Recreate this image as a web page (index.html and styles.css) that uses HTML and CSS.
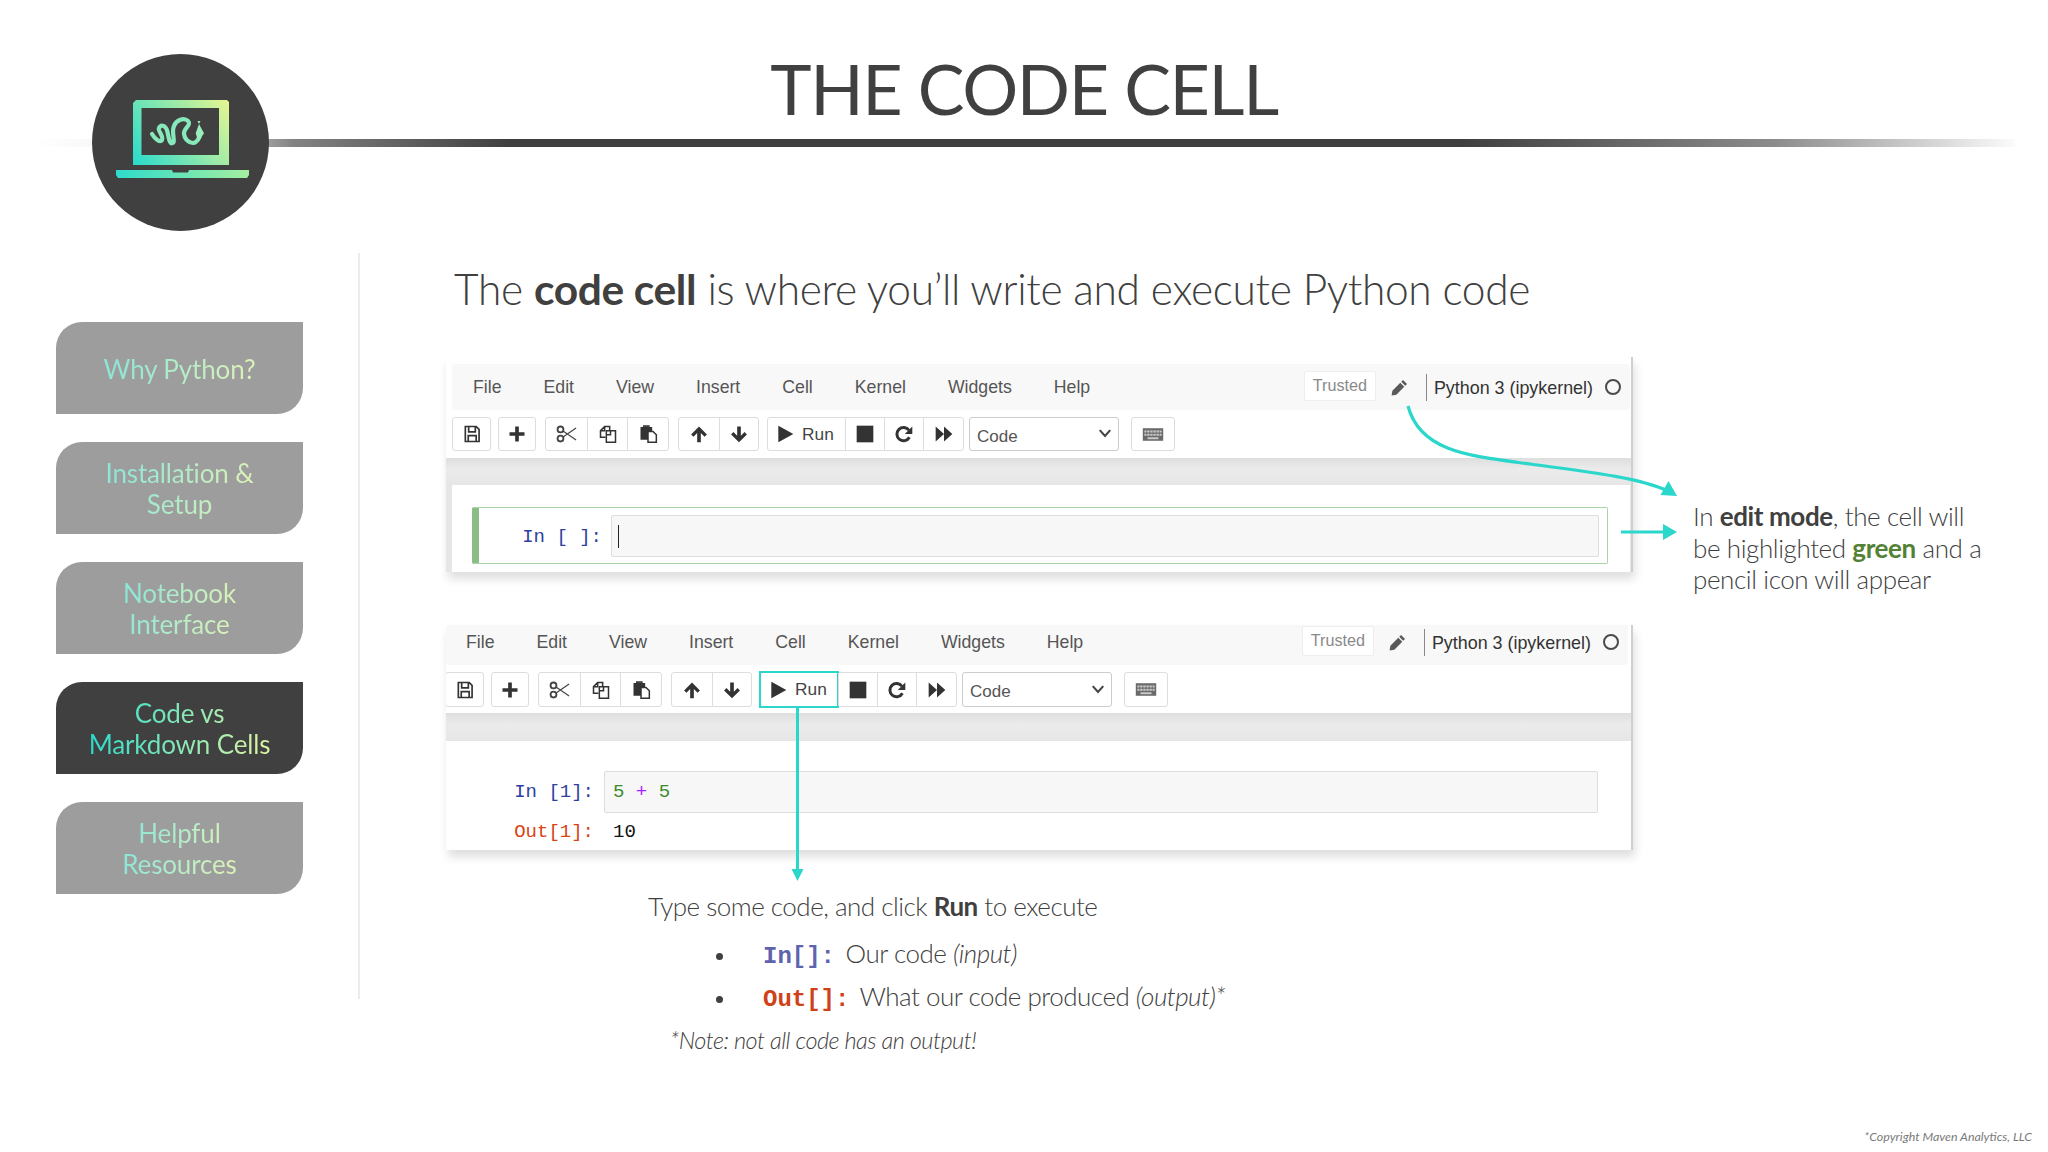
FILE: index.html
```html
<!DOCTYPE html>
<html lang="en">
<head>
<meta charset="utf-8">
<title>The Code Cell</title>
<link rel="stylesheet" href="styles.css">
</head>
<body>
<svg class="defs" width="0" height="0" aria-hidden="true">
  <defs>
    <linearGradient id="logoGrad" gradientUnits="userSpaceOnUse" x1="45" y1="110" x2="135" y2="45">
      <stop offset="0" stop-color="#2edbcb"/><stop offset="1" stop-color="#e6f590"/>
    </linearGradient>
    <linearGradient id="baseGrad" x1="0" y1="0" x2="1" y2="0">
      <stop offset="0" stop-color="#2edbcb"/><stop offset="1" stop-color="#a5eea0"/>
    </linearGradient>
    <symbol id="i-save" viewBox="0 0 24 24"><path d="M4 3h13l3.500 3.500V21H4z M8 3.500v6h8v-6 M7.500 21v-7h9.500v7" fill="none" stroke="currentColor" stroke-width="2"/></symbol>
    <symbol id="i-plus" viewBox="0 0 24 24"><path d="M9.800 3h4.400v6.800H21v4.400h-6.800V21H9.800v-6.800H3V9.800h6.800z" fill="currentColor"/></symbol>
    <symbol id="i-cut" viewBox="0 0 24 24"><circle cx="6" cy="7" r="3.200" fill="none" stroke="currentColor" stroke-width="2"/><circle cx="6" cy="17" r="3.200" fill="none" stroke="currentColor" stroke-width="2"/><path d="M8.800 8.800 23 18.500M8.800 15.200 23 5.500" stroke="currentColor" stroke-width="1.300" fill="none"/></symbol>
    <symbol id="i-copy" viewBox="0 0 24 24"><path d="M9 16H3V8l5-5h6v5 M8 3v5H3" fill="none" stroke="currentColor" stroke-width="1.800"/><path d="M10 8h11v14H10z M15 8v5h-5" fill="#fff" stroke="currentColor" stroke-width="1.800"/></symbol>
    <symbol id="i-paste" viewBox="0 0 24 24"><path d="M3 3.500h14V9h-5v10H3z" fill="currentColor"/><path d="M6 1.500h8v2H6z" fill="currentColor"/><path d="M12 9h6l4 4v9H12z" fill="#fff" stroke="currentColor" stroke-width="1.800"/></symbol>
    <symbol id="i-up" viewBox="0 0 24 24"><path d="M12 3l9.500 9.500-2.800 2.800-4.500-4.500V22H9.800V10.800l-4.500 4.500-2.800-2.800z" fill="currentColor"/></symbol>
    <symbol id="i-down" viewBox="0 0 24 24"><path d="M12 22l9.500-9.500-2.800-2.800-4.500 4.500V3H9.800v11.200l-4.500-4.500-2.800 2.800z" fill="currentColor"/></symbol>
    <symbol id="i-play" viewBox="0 0 24 24"><path d="M4 2l18 10L4 22z" fill="currentColor"/></symbol>
    <symbol id="i-stop" viewBox="0 0 24 24"><path d="M2 2h20v20H2z" fill="currentColor"/></symbol>
    <symbol id="i-redo" viewBox="0 0 24 24"><path d="M18.500 16a8 8 0 1 1-.5-8.500" fill="none" stroke="currentColor" stroke-width="3.600"/><path d="M22 3v9h-9z" fill="currentColor"/></symbol>
    <symbol id="i-ff" viewBox="0 0 24 24"><path d="M2 3l10 9-10 9z M12 3l10 9-10 9z" fill="currentColor"/></symbol>
    <symbol id="i-kbd" viewBox="0 0 28 24"><path d="M1 4h26v16H1z" fill="#6a6a6a"/><path d="M3 7h22v2.500H3z M3 11h22v2.500H3z" fill="#c9c9c9"/><path d="M7 15.500h14V18H7z" fill="#c9c9c9"/><path d="M6 7v6.500 M10 7v6.500 M14 7v6.500 M18 7v6.500 M22 7v6.500" stroke="#6a6a6a" stroke-width="1"/></symbol>
    <symbol id="i-pencil" viewBox="0 0 24 24"><path d="M16.500 2.500l5 5-2.300 2.300-5-5z M13 6l5 5L8 21l-6 1 1-6z" fill="currentColor"/></symbol>
    <symbol id="i-chev" viewBox="0 0 24 24"><path d="M3 7l9 10 9-10" fill="none" stroke="currentColor" stroke-width="3.600"/></symbol>
  </defs>
</svg>

<div class="slide">
  <header class="head">
    <h1 class="title">THE CODE CELL</h1>
    <div class="rule"></div>
    <div class="logo">
      <svg class="logo-art" viewBox="0 0 177 177" width="177" height="177" aria-hidden="true">
        <path fill-rule="evenodd" d="M44 46h91l2 2v63H41V49z M49.500 54v47h77.500V54z" fill="url(#logoGrad)"/>
        <path d="M24 116h56l1 2.500h15l1-2.500h60v5l-2 3H26l-2-3z" fill="url(#baseGrad)"/>
        <path d="M60 80C63 85 68 89 70 86C72 82 65 76 67 74C69 70 74 71 75.500 78C77 86 78 90 80.500 89C84 88 79 78 82 72C84 66 92 63 96 67C100 71 92 74 92 79C92 85 97 89 101 89C104 89 106 86 107.500 83" fill="none" stroke="#86e8bb" stroke-width="4.200" stroke-linecap="round"/>
        <path d="M107 70l5 9.300-5.700 8.400-2.600-8.400z M105.500 67h3l-1.500 3z" fill="#9beebb"/>
      </svg>
    </div>
  </header>

  <div class="body">
    <nav class="nav">
      <a class="nav-btn"><span class="nav-label">Why Python?</span></a>
      <a class="nav-btn"><span class="nav-label">Installation &amp;<br>Setup</span></a>
      <a class="nav-btn"><span class="nav-label">Notebook<br>Interface</span></a>
      <a class="nav-btn active"><span class="nav-label">Code vs<br>Markdown Cells</span></a>
      <a class="nav-btn"><span class="nav-label">Helpful<br>Resources</span></a>
    </nav>

    <main class="main">
      <h2 class="lead">The <b>code cell</b> is where you’ll write and execute Python code</h2>

      <div class="row">
        <section class="nb nb-edit">
          <div class="nb-inner">
            <div class="menubar">
              <span>File</span><span>Edit</span><span>View</span><span>Insert</span><span>Cell</span><span>Kernel</span><span>Widgets</span><span>Help</span>
              <div class="kernel">
                <span class="trusted">Trusted</span>
                <svg class="ic-pencil"><use href="#i-pencil"/></svg>
                <span class="kname">Python 3 (ipykernel)</span>
                <i class="kstatus"></i>
              </div>
            </div>
            <div class="toolbar">
              <div class="group"><div class="tb w37"><svg class="ic"><use href="#i-save"/></svg></div></div>
              <div class="group m7"><div class="tb w36"><svg class="ic"><use href="#i-plus"/></svg></div></div>
              <div class="group"><div class="tb w41"><svg class="ic ic-l"><use href="#i-cut"/></svg></div><div class="tb w41"><svg class="ic"><use href="#i-copy"/></svg></div><div class="tb w41"><svg class="ic"><use href="#i-paste"/></svg></div></div>
              <div class="group"><div class="tb w40"><svg class="ic"><use href="#i-up"/></svg></div><div class="tb w40"><svg class="ic"><use href="#i-down"/></svg></div></div>
              <div class="group m8"><div class="tb w77 run"><svg class="ic"><use href="#i-play"/></svg><span>Run</span></div><div class="tb w39"><svg class="ic"><use href="#i-stop"/></svg></div><div class="tb w39"><svg class="ic"><use href="#i-redo"/></svg></div><div class="tb w40b"><svg class="ic"><use href="#i-ff"/></svg></div></div>
              <div class="select">Code<svg class="ic-chev"><use href="#i-chev"/></svg></div>
              <div class="group m12"><div class="tb w42"><svg class="ic ic-k"><use href="#i-kbd"/></svg></div></div>
            </div>
            <div class="band"></div>
            <div class="panel">
              <div class="cell-selected">
                <div class="prompt in">In [ ]:</div>
                <div class="input"><i class="caret"></i></div>
              </div>
            </div>
          </div>
        </section>
        <p class="callout">In <b>edit mode</b>, the cell will<br>be highlighted <b class="green">green</b> and a<br>pencil icon will appear</p>
      </div>

      <section class="nb nb-run">
        <div class="nb-inner">
          <div class="menubar">
            <span>File</span><span>Edit</span><span>View</span><span>Insert</span><span>Cell</span><span>Kernel</span><span>Widgets</span><span>Help</span>
            <div class="kernel">
              <span class="trusted">Trusted</span>
              <svg class="ic-pencil"><use href="#i-pencil"/></svg>
              <span class="kname">Python 3 (ipykernel)</span>
              <i class="kstatus"></i>
            </div>
          </div>
          <div class="toolbar">
            <div class="group"><div class="tb w37"><svg class="ic"><use href="#i-save"/></svg></div></div>
            <div class="group m7"><div class="tb w36"><svg class="ic"><use href="#i-plus"/></svg></div></div>
            <div class="group"><div class="tb w41"><svg class="ic ic-l"><use href="#i-cut"/></svg></div><div class="tb w41"><svg class="ic"><use href="#i-copy"/></svg></div><div class="tb w41"><svg class="ic"><use href="#i-paste"/></svg></div></div>
            <div class="group"><div class="tb w40"><svg class="ic"><use href="#i-up"/></svg></div><div class="tb w40"><svg class="ic"><use href="#i-down"/></svg></div></div>
            <div class="group m8"><div class="tb w77 run hl"><svg class="ic"><use href="#i-play"/></svg><span>Run</span></div><div class="tb w39"><svg class="ic"><use href="#i-stop"/></svg></div><div class="tb w39"><svg class="ic"><use href="#i-redo"/></svg></div><div class="tb w40b"><svg class="ic"><use href="#i-ff"/></svg></div></div>
            <div class="select">Code<svg class="ic-chev"><use href="#i-chev"/></svg></div>
            <div class="group m12"><div class="tb w42"><svg class="ic ic-k"><use href="#i-kbd"/></svg></div></div>
          </div>
          <div class="band"></div>
          <div class="panel panel-run">
            <div class="io">
              <div class="prompt in">In [1]:</div>
              <div class="input code"><span class="num">5</span> <span class="op">+</span> <span class="num">5</span></div>
            </div>
            <div class="io io-out">
              <div class="prompt out">Out[1]:</div>
              <div class="output">10</div>
            </div>
          </div>
        </div>
      </section>

      <div class="notes">
        <p class="notes-lead">Type some code, and click <b>Run</b> to execute</p>
        <ul class="notes-list">
          <li class="n1"><code class="c-in">In[]:</code> Our code <em>(input)</em></li>
          <li class="n2"><code class="c-out">Out[]:</code> What our code produced <em>(output)*</em></li>
        </ul>
        <p class="notes-foot">*Note: not all code has an output!</p>
      </div>
    </main>
  </div>

  <footer class="foot">*Copyright Maven Analytics, LLC</footer>

  <svg class="arrows" viewBox="0 0 2048 1152" width="2048" height="1152" aria-hidden="true">
    <path d="M1408 406C1420 452 1470 456 1530 464S1640 478 1668 491" fill="none" stroke="#2bd6ca" stroke-width="3.200"/>
    <path d="M1677 496l-16.500-1 8-14z" fill="#2bd6ca"/>
    <path d="M1621 532h44" fill="none" stroke="#2bd6ca" stroke-width="3.200"/>
    <path d="M1677 532l-14-8v16z" fill="#2bd6ca"/>
    <path d="M797.500 707v165" fill="none" stroke="#2bd6ca" stroke-width="3"/>
    <path d="M797.500 881l-6-12h12z" fill="#2bd6ca"/>
  </svg>
</div>
</body>
</html>
```

FILE: styles.css
```css
* { box-sizing: border-box; }
html, body { margin: 0; padding: 0; background: #fff; }
.defs { position: absolute; }

.slide {
  position: relative;
  width: 2048px;
  height: 1152px;
  display: flex;
  flex-direction: column;
  overflow: hidden;
  font-family: Lato, "Liberation Sans", sans-serif;
  color: #404040;
}

/* header */
.head { position: relative; height: 253px; padding-top: 46px; flex: none; }
.title {
  margin: 0;
  height: 93px;
  line-height: 84px;
  font-size: 70px;
  font-weight: 400;
  letter-spacing: -1.4px;
  text-align: center;
  color: #404040;
}
.rule {
  margin-left: 35px;
  width: 1980px;
  height: 8px;
  background: linear-gradient(90deg, rgba(64,64,64,0) 0, rgba(64,64,64,.1) 8%, rgba(64,64,64,.65) 13%, #3f3f3f 24%, #3f3f3f 72%, rgba(64,64,64,.6) 88%, rgba(64,64,64,.02) 100%);
}
.logo {
  position: absolute;
  left: 92px;
  top: 54px;
  width: 177px;
  height: 177px;
  border-radius: 50%;
  background: #404040;
}
.logo-art { display: block; }

/* sidebar + content */
.body { display: flex; flex: none; }
.nav {
  width: 360px;
  height: 746px;
  flex: none;
  padding: 69px 0 0 56px;
  border-right: 2px solid #ececec;
  display: flex;
  flex-direction: column;
  gap: 28px;
}
.nav-btn {
  width: 247px;
  height: 92px;
  padding-top: 2px;
  display: flex;
  align-items: center;
  justify-content: center;
  text-align: center;
  background: #9d9d9d;
  border-radius: 26px 0 26px 0;
}
.nav-btn.active { background: #404040; }
.nav-label {
  font-size: 26px;
  letter-spacing: -.15px;
  line-height: 31px;
  background: linear-gradient(100deg, #8fe6d6 10%, #dcf2b8 95%);
  -webkit-background-clip: text;
  background-clip: text;
  color: transparent;
}
.active .nav-label { background-image: linear-gradient(100deg, #2edbcb 5%, #d8f5a5 95%); }

.main { padding-left: 86px; flex: 1; min-width: 0; }
.lead {
  margin: 11px 0 43px 8px;
  font-size: 42.500px;
  letter-spacing: -.36px;
  line-height: 50px;
  font-weight: 300;
  white-space: nowrap;
  color: #404040;
}
.lead b { font-weight: 700; }

.row { display: flex; align-items: flex-start; height: 223px; }

/* notebook screenshots */
.nb {
  width: 1187px;
  flex: none;
  overflow: hidden;
  background: #fff;
  border-right: 2px solid #cfcfcf;
  box-shadow: 2px 7px 9px rgba(0,0,0,.13);
  font-family: "Liberation Sans", Arial, sans-serif;
  color: #555;
}
.nb-edit { height: 215px; padding: 7px 1px 0 6px; background: linear-gradient(#fff 101px, #e6e6e6 101px); }
.nb-run { height: 225px; margin-top: 45px; padding-right: 3px; }
.nb-run .nb-inner { margin: -6px 0 0 -1px; }

.menubar {
  height: 46px;
  display: flex;
  align-items: center;
  gap: 42px;
  padding-left: 21px;
  background: #f8f8f8;
  border-radius: 4px;
  font-size: 17.700px;
}
.kernel { margin-left: auto; display: flex; align-items: center; height: 100%; }
.trusted {
  width: 72px;
  height: 30px;
  margin-top: -2px;
  border: 1px solid #eee;
  border-radius: 2px;
  background: #fff;
  color: #8a8a8a;
  font-size: 16.200px;
  line-height: 27px;
  text-align: center;
}
.ic-pencil { width: 19px; height: 21px; margin: 0 17px 0 14px; color: #595959; }
.kname {
  height: 27px;
  padding-left: 7px;
  border-left: 1px solid #888;
  color: #333;
  font-size: 17.900px;
  line-height: 28px;
}
.kstatus {
  width: 16px;
  height: 16px;
  margin: 0 9px 0 12px;
  border: 2px solid #4a4a4a;
  border-radius: 50%;
}

.toolbar { display: flex; margin-top: 7px; height: 34px; }
.group {
  display: flex;
  margin-left: 9px;
  border: 1px solid #ddd;
  border-radius: 3px;
  background: #fff;
}
.group:first-child { margin-left: 0; }
.group.m7 { margin-left: 7px; }
.group.m8 { margin-left: 8px; }
.group.m12 { margin-left: 12px; }
.tb {
  display: flex;
  align-items: center;
  justify-content: center;
  height: 100%;
  color: #333;
  border-left: 1px solid #ddd;
  font-size: 17.300px;
  position: relative;
}
.tb:first-child { border-left: 0; }
.w36 { width: 36px; } .w37 { width: 37px; } .w39 { width: 39px; } .w40 { width: 39.500px; } .w40b { width: 40px; } .w41 { width: 40.700px; } .w42 { width: 42px; } .w77 { width: 77px; }
.ic { width: 20px; height: 20px; }
.ic-l { width: 22px; height: 22px; color: #444; }
.ic-k { width: 22px; height: 19px; }
.run { gap: 7px; justify-content: flex-start; padding-left: 7px; }
.run span { color: #444; }
.hl::after {
  content: "";
  position: absolute;
  left: -2px;
  top: -2px;
  right: -1px;
  bottom: -2px;
  border: 2.500px solid #2bd6ca;
}
.select {
  display: flex;
  align-items: center;
  justify-content: space-between;
  width: 150px;
  margin-left: 5px;
  padding: 5px 6px 0 7px;
  border: 1px solid #ccc;
  border-radius: 3px;
  font-size: 17px;
  color: #555;
}
.ic-chev { width: 14px; height: 14px; margin-top: -7px; color: #444; }

.band { height: 27px; margin: 7px -1px 0 -6px; background: linear-gradient(#dedede, #ebebeb 40%, #e6e6e6); }
.nb-run .band { margin: 6px -4px 0 -2px; height: 28px; }
.nb-run .toolbar { height: 35px; }

.panel { background: #fff; height: 87px; padding: 22px 22px 0 20px; }
.cell-selected {
  display: flex;
  height: 57px;
  padding: 7px 8px 7px 0;
  border: 1px solid #a9d5a6;
  border-left: 7px solid #8dbd86;
  border-radius: 2px;
}
.prompt {
  width: 132px;
  flex: none;
  padding-right: 9px;
  text-align: right;
  font-family: "Liberation Mono", monospace;
  font-size: 19px;
  line-height: 44px;
}
.prompt.in { color: #303f9f; }
.prompt.out { color: #d84315; }
.input {
  flex: 1;
  height: 42px;
  border: 1px solid #ddd;
  border-radius: 2px;
  background: #f7f7f7;
  position: relative;
}
.caret { position: absolute; left: 6px; top: 9px; width: 1px; height: 23px; background: #222; }

.panel-run { height: 110px; padding: 30px 30px 0 0; }
.io { display: flex; }
.io .prompt { width: 159px; padding-right: 10px; line-height: 42px; }
.code {
  padding-left: 8px;
  font-family: "Liberation Mono", monospace;
  font-size: 19px;
  line-height: 40px;
  white-space: pre;
}
.num { color: #3f8a2c; }
.op { color: #aa22ff; }
.io-out .prompt { line-height: 38px; }
.output {
  padding-left: 9px;
  font-family: "Liberation Mono", monospace;
  font-size: 19px;
  line-height: 38px;
  color: #111;
}

/* callout + notes */
.callout {
  margin: 144px 0 0 60px;
  font-size: 26px;
  letter-spacing: -.4px;
  line-height: 31.500px;
  font-weight: 300;
  white-space: nowrap;
  color: #404040;
}
.callout b { font-weight: 700; }
.callout .green { color: #548235; }

.notes { padding-left: 202px; font-weight: 300; font-size: 26px; letter-spacing: -.5px; color: #404040; }
.notes p { margin: 0; }
.notes b { font-weight: 700; }
.notes-lead { margin-top: 40px !important; line-height: 32px; }
.notes-list { margin: 14px 0 0; padding: 0 0 0 115px; list-style: none; }
.notes-list li { height: 34px; line-height: 34px; white-space: nowrap; }
.notes-list li.n2 { margin-top: 9px; }
.notes-list li::before {
  content: "";
  display: inline-block;
  width: 7px;
  height: 7px;
  margin: 0 40px 0 -47px;
  border-radius: 50%;
  background: #404040;
  vertical-align: middle;
}
.notes-list code { font-family: "Liberation Mono", monospace; font-weight: 700; font-size: 24px; letter-spacing: 0; margin-right: 4px; line-height: 1; }
.c-in { color: #5e63ad; }
.c-out { color: #cf4218; }
.notes-foot { margin-top: 10px !important; margin-left: 22px !important; font-size: 23.500px; line-height: 34px; font-style: italic; }

.foot {
  margin-top: auto;
  padding: 0 16px 8px 0;
  text-align: right;
  font-size: 12.400px;
  font-style: italic;
  color: #7a7a7a;
}

.arrows { position: absolute; left: 0; top: 0; pointer-events: none; }
```
